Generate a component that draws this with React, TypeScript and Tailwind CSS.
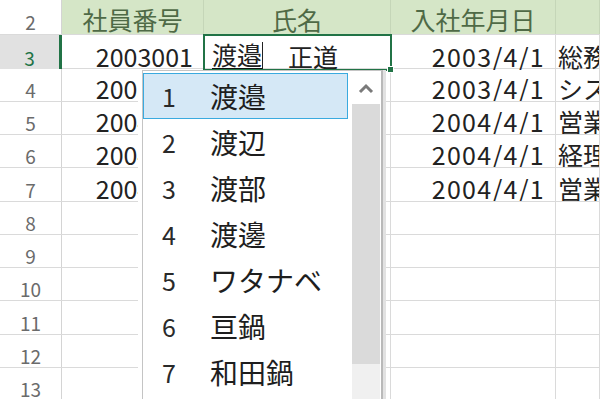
import { ReactNode } from "react";

const FONT = "font-['Noto_Sans_CJK_JP','Noto_Sans',sans-serif]";

type DataRow = { n: number; id: string; name: string; date: string; dept: string };

const rows: DataRow[] = [
  { n: 3, id: "2003001", name: "", date: "2003/4/1", dept: "総務部" },
  { n: 4, id: "2003002", name: "佐藤　一郎", date: "2003/4/1", dept: "システム部" },
  { n: 5, id: "2004001", name: "鈴木　花子", date: "2004/4/1", dept: "営業部" },
  { n: 6, id: "2004002", name: "高橋　健", date: "2004/4/1", dept: "経理部" },
  { n: 7, id: "2004003", name: "田中　美咲", date: "2004/4/1", dept: "営業部" },
];

// row heights incl. the 1px bottom grid line
const emptyRows = [
  { n: 8, h: "h-[33px]" },
  { n: 9, h: "h-[33px]" },
  { n: 10, h: "h-[33px]" },
  { n: 11, h: "h-[34px]" },
  { n: 12, h: "h-[33px]" },
  { n: 13, h: "h-[33px]" },
];
const dataHeights = ["h-[34px]", "h-[33px]", "h-[33px]", "h-[33px]", "h-[34px]"];

const candidates = ["渡邉", "渡辺", "渡部", "渡邊", "ワタナベ", "亘鍋", "和田鍋"];

function RowHead({ n, active }: { n: number; active?: boolean }) {
  return (
    <div
      className={`flex items-center justify-center pt-[9px] text-[19px] leading-none ${
        active
          ? "bg-[#e1e1e1] text-[#217346] border-r-[3px] border-r-[#217346]"
          : "bg-white text-[#6b6b6b] border-r border-r-[#d4d4d4]"
      }`}
    >
      {n}
    </div>
  );
}

function Cell({ children, className = "" }: { children?: ReactNode; className?: string }) {
  return (
    <div
      className={`flex items-center pt-[7px] text-[25px] leading-none text-[#222] border-r border-r-[#dadada] overflow-hidden whitespace-nowrap ${className}`}
    >
      {children}
    </div>
  );
}

const rowGrid = "grid grid-cols-[62px_142px_187px_165px_1fr] border-b border-b-[#dadada]";

export default function App() {
  return (
    <div className={`relative w-[600px] h-[399px] overflow-hidden bg-white ${FONT}`}>
      {/* header row 2 */}
      <div className={`${rowGrid} h-[35px]`}>
        <RowHead n={2} />
        {["社員番号", "氏名", "入社年月日", ""].map((t, i) => (
          <div
            key={i}
            className="flex items-center justify-center pt-[4px] bg-[#d5e6c7] text-[25px] leading-none text-[#4f6a46] border-r border-r-[#c5d6b8]"
          >
            {t}
          </div>
        ))}
      </div>

      {rows.map((r, i) => (
        <div key={r.n} className={`${rowGrid} ${dataHeights[i]}`}>
          <RowHead n={r.n} active={r.n === 3} />
          <Cell className="justify-end pr-[10px]">{r.id}</Cell>
          {r.n === 3 ? (
            <div className="relative flex items-center pl-[8px] pt-[7px] text-[25px] leading-none text-[#222] whitespace-nowrap border-r border-r-[#dadada]">
              <span className="border-b-2 border-b-[#111] border-r border-r-[#222] pb-[1px]">渡邉</span>
              <span>　正道</span>
              <div className="absolute -left-[1px] -top-[1px] -right-[2px] -bottom-[1px] border-2 border-[#217346]">
                <div className="absolute -right-[4px] -bottom-[4px] w-[7px] h-[7px] bg-[#217346] border border-white" />
              </div>
            </div>
          ) : (
            <Cell className="pl-[8px]">{r.name}</Cell>
          )}
          <Cell className="justify-end pr-[10px] tracking-[1.3px]">{r.date}</Cell>
          <Cell className="pl-[2px]">{r.dept}</Cell>
        </div>
      ))}

      {emptyRows.map((r) => (
        <div key={r.n} className={`${rowGrid} ${r.h}`}>
          <RowHead n={r.n} />
          <Cell />
          <Cell />
          <Cell />
          <Cell />
        </div>
      ))}

      {/* IME candidate window */}
      <div className="absolute left-[142px] top-[70px] w-[241px] bottom-0 flex bg-white border-l border-t border-[#c4c4c4] border-r-2 border-r-[#b9b9b9] shadow-[3px_0_0_#e2e2e2,-4px_0_0_#ffffff]">
        <div className="w-[205px] pt-[2px]">
          {candidates.map((c, i) => (
            <div
              key={c}
              className={`flex items-center h-[46px] ${
                i === 0 ? "bg-[#d5e8f6] border border-[#3aaadf]" : "border border-transparent"
              }`}
            >
              <span className="w-[66px] pl-[18px] text-[25px] leading-none text-[#2a2a2a]">{i + 1}</span>
              <span className="text-[28px] leading-none text-[#1e1e1e]">{c}</span>
            </div>
          ))}
        </div>
        <div className="ml-[4px] w-[28px] pt-[2px] flex flex-col">
          <div className="h-[31px] flex items-center justify-center bg-white">
            <svg width="16" height="11" viewBox="0 0 16 11">
              <path d="M2 9 L8 3 L14 9" fill="none" stroke="#7a7a7a" strokeWidth="3" />
            </svg>
          </div>
          <div className="h-[260px] bg-[#dadada]" />
          <div className="flex-1 bg-[#f0f0f0]" />
        </div>
      </div>
    </div>
  );
}
